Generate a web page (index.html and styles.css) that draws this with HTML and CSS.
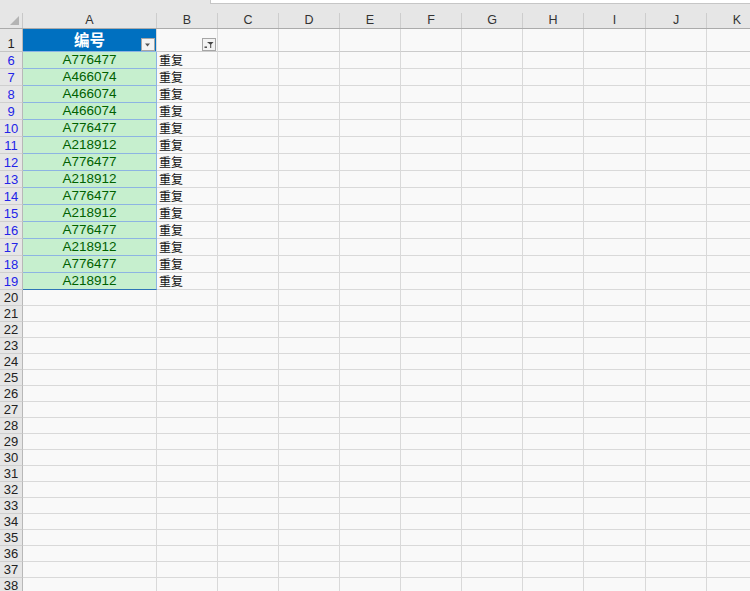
FILE: index.html
```html
<!DOCTYPE html>
<html lang="zh">
<head>
<meta charset="utf-8">
<link rel="stylesheet" href="styles.css">
</head>
<body>
<div class="sheet">
  <div class="topbar"><div class="formula"></div></div>
  <div class="row colhead">
    <div class="corner"><span class="tri"></span></div>
    <div class="ch">A</div><div class="ch">B</div><div class="ch">C</div><div class="ch">D</div><div class="ch">E</div><div class="ch">F</div><div class="ch">G</div><div class="ch">H</div><div class="ch">I</div><div class="ch">J</div><div class="ch">K</div>
  </div>
  <div class="row r1">
    <div class="rh">1</div>
    <div class="c title">编号<span class="fbtn"><svg width="8" height="6" viewBox="0 0 8 6"><path d="M1 1.5h5l-2.5 3z" fill="#555"/></svg></span></div>
    <div class="c"><span class="fbtn"><svg width="10" height="8" viewBox="0 0 10 8"><path d="M3 1h6.5L7.2 3.6V7H6.2V3.6z" fill="#444"/><rect x="0.5" y="5.5" width="2.5" height="1.4" fill="#444"/></svg></span></div>
    <div class="c"></div><div class="c"></div><div class="c"></div><div class="c"></div><div class="c"></div><div class="c"></div><div class="c"></div><div class="c"></div><div class="c"></div>
  </div>
  <div class="row d"><div class="rh f">6</div><div class="c g">A776477</div><div class="c t">重复</div><div class="c"></div><div class="c"></div><div class="c"></div><div class="c"></div><div class="c"></div><div class="c"></div><div class="c"></div><div class="c"></div><div class="c"></div></div>
  <div class="row d"><div class="rh f">7</div><div class="c g">A466074</div><div class="c t">重复</div><div class="c"></div><div class="c"></div><div class="c"></div><div class="c"></div><div class="c"></div><div class="c"></div><div class="c"></div><div class="c"></div><div class="c"></div></div>
  <div class="row d"><div class="rh f">8</div><div class="c g">A466074</div><div class="c t">重复</div><div class="c"></div><div class="c"></div><div class="c"></div><div class="c"></div><div class="c"></div><div class="c"></div><div class="c"></div><div class="c"></div><div class="c"></div></div>
  <div class="row d"><div class="rh f">9</div><div class="c g">A466074</div><div class="c t">重复</div><div class="c"></div><div class="c"></div><div class="c"></div><div class="c"></div><div class="c"></div><div class="c"></div><div class="c"></div><div class="c"></div><div class="c"></div></div>
  <div class="row d"><div class="rh f">10</div><div class="c g">A776477</div><div class="c t">重复</div><div class="c"></div><div class="c"></div><div class="c"></div><div class="c"></div><div class="c"></div><div class="c"></div><div class="c"></div><div class="c"></div><div class="c"></div></div>
  <div class="row d"><div class="rh f">11</div><div class="c g">A218912</div><div class="c t">重复</div><div class="c"></div><div class="c"></div><div class="c"></div><div class="c"></div><div class="c"></div><div class="c"></div><div class="c"></div><div class="c"></div><div class="c"></div></div>
  <div class="row d"><div class="rh f">12</div><div class="c g">A776477</div><div class="c t">重复</div><div class="c"></div><div class="c"></div><div class="c"></div><div class="c"></div><div class="c"></div><div class="c"></div><div class="c"></div><div class="c"></div><div class="c"></div></div>
  <div class="row d"><div class="rh f">13</div><div class="c g">A218912</div><div class="c t">重复</div><div class="c"></div><div class="c"></div><div class="c"></div><div class="c"></div><div class="c"></div><div class="c"></div><div class="c"></div><div class="c"></div><div class="c"></div></div>
  <div class="row d"><div class="rh f">14</div><div class="c g">A776477</div><div class="c t">重复</div><div class="c"></div><div class="c"></div><div class="c"></div><div class="c"></div><div class="c"></div><div class="c"></div><div class="c"></div><div class="c"></div><div class="c"></div></div>
  <div class="row d"><div class="rh f">15</div><div class="c g">A218912</div><div class="c t">重复</div><div class="c"></div><div class="c"></div><div class="c"></div><div class="c"></div><div class="c"></div><div class="c"></div><div class="c"></div><div class="c"></div><div class="c"></div></div>
  <div class="row d"><div class="rh f">16</div><div class="c g">A776477</div><div class="c t">重复</div><div class="c"></div><div class="c"></div><div class="c"></div><div class="c"></div><div class="c"></div><div class="c"></div><div class="c"></div><div class="c"></div><div class="c"></div></div>
  <div class="row d"><div class="rh f">17</div><div class="c g">A218912</div><div class="c t">重复</div><div class="c"></div><div class="c"></div><div class="c"></div><div class="c"></div><div class="c"></div><div class="c"></div><div class="c"></div><div class="c"></div><div class="c"></div></div>
  <div class="row d"><div class="rh f">18</div><div class="c g">A776477</div><div class="c t">重复</div><div class="c"></div><div class="c"></div><div class="c"></div><div class="c"></div><div class="c"></div><div class="c"></div><div class="c"></div><div class="c"></div><div class="c"></div></div>
  <div class="row d"><div class="rh f">19</div><div class="c g last">A218912</div><div class="c t">重复</div><div class="c"></div><div class="c"></div><div class="c"></div><div class="c"></div><div class="c"></div><div class="c"></div><div class="c"></div><div class="c"></div><div class="c"></div></div>
  <div class="row e"><div class="rh">20</div><div class="c"></div><div class="c"></div><div class="c"></div><div class="c"></div><div class="c"></div><div class="c"></div><div class="c"></div><div class="c"></div><div class="c"></div><div class="c"></div><div class="c"></div></div>
  <div class="row e"><div class="rh">21</div><div class="c"></div><div class="c"></div><div class="c"></div><div class="c"></div><div class="c"></div><div class="c"></div><div class="c"></div><div class="c"></div><div class="c"></div><div class="c"></div><div class="c"></div></div>
  <div class="row e"><div class="rh">22</div><div class="c"></div><div class="c"></div><div class="c"></div><div class="c"></div><div class="c"></div><div class="c"></div><div class="c"></div><div class="c"></div><div class="c"></div><div class="c"></div><div class="c"></div></div>
  <div class="row e"><div class="rh">23</div><div class="c"></div><div class="c"></div><div class="c"></div><div class="c"></div><div class="c"></div><div class="c"></div><div class="c"></div><div class="c"></div><div class="c"></div><div class="c"></div><div class="c"></div></div>
  <div class="row e"><div class="rh">24</div><div class="c"></div><div class="c"></div><div class="c"></div><div class="c"></div><div class="c"></div><div class="c"></div><div class="c"></div><div class="c"></div><div class="c"></div><div class="c"></div><div class="c"></div></div>
  <div class="row e"><div class="rh">25</div><div class="c"></div><div class="c"></div><div class="c"></div><div class="c"></div><div class="c"></div><div class="c"></div><div class="c"></div><div class="c"></div><div class="c"></div><div class="c"></div><div class="c"></div></div>
  <div class="row e"><div class="rh">26</div><div class="c"></div><div class="c"></div><div class="c"></div><div class="c"></div><div class="c"></div><div class="c"></div><div class="c"></div><div class="c"></div><div class="c"></div><div class="c"></div><div class="c"></div></div>
  <div class="row e"><div class="rh">27</div><div class="c"></div><div class="c"></div><div class="c"></div><div class="c"></div><div class="c"></div><div class="c"></div><div class="c"></div><div class="c"></div><div class="c"></div><div class="c"></div><div class="c"></div></div>
  <div class="row e"><div class="rh">28</div><div class="c"></div><div class="c"></div><div class="c"></div><div class="c"></div><div class="c"></div><div class="c"></div><div class="c"></div><div class="c"></div><div class="c"></div><div class="c"></div><div class="c"></div></div>
  <div class="row e"><div class="rh">29</div><div class="c"></div><div class="c"></div><div class="c"></div><div class="c"></div><div class="c"></div><div class="c"></div><div class="c"></div><div class="c"></div><div class="c"></div><div class="c"></div><div class="c"></div></div>
  <div class="row e"><div class="rh">30</div><div class="c"></div><div class="c"></div><div class="c"></div><div class="c"></div><div class="c"></div><div class="c"></div><div class="c"></div><div class="c"></div><div class="c"></div><div class="c"></div><div class="c"></div></div>
  <div class="row e"><div class="rh">31</div><div class="c"></div><div class="c"></div><div class="c"></div><div class="c"></div><div class="c"></div><div class="c"></div><div class="c"></div><div class="c"></div><div class="c"></div><div class="c"></div><div class="c"></div></div>
  <div class="row e"><div class="rh">32</div><div class="c"></div><div class="c"></div><div class="c"></div><div class="c"></div><div class="c"></div><div class="c"></div><div class="c"></div><div class="c"></div><div class="c"></div><div class="c"></div><div class="c"></div></div>
  <div class="row e"><div class="rh">33</div><div class="c"></div><div class="c"></div><div class="c"></div><div class="c"></div><div class="c"></div><div class="c"></div><div class="c"></div><div class="c"></div><div class="c"></div><div class="c"></div><div class="c"></div></div>
  <div class="row e"><div class="rh">34</div><div class="c"></div><div class="c"></div><div class="c"></div><div class="c"></div><div class="c"></div><div class="c"></div><div class="c"></div><div class="c"></div><div class="c"></div><div class="c"></div><div class="c"></div></div>
  <div class="row e"><div class="rh">35</div><div class="c"></div><div class="c"></div><div class="c"></div><div class="c"></div><div class="c"></div><div class="c"></div><div class="c"></div><div class="c"></div><div class="c"></div><div class="c"></div><div class="c"></div></div>
  <div class="row e"><div class="rh">36</div><div class="c"></div><div class="c"></div><div class="c"></div><div class="c"></div><div class="c"></div><div class="c"></div><div class="c"></div><div class="c"></div><div class="c"></div><div class="c"></div><div class="c"></div></div>
  <div class="row e"><div class="rh">37</div><div class="c"></div><div class="c"></div><div class="c"></div><div class="c"></div><div class="c"></div><div class="c"></div><div class="c"></div><div class="c"></div><div class="c"></div><div class="c"></div><div class="c"></div></div>
  <div class="row e"><div class="rh">38</div><div class="c"></div><div class="c"></div><div class="c"></div><div class="c"></div><div class="c"></div><div class="c"></div><div class="c"></div><div class="c"></div><div class="c"></div><div class="c"></div><div class="c"></div></div>
</div>
</body>
</html>
```

FILE: styles.css
```css
* { box-sizing: border-box; }
html, body { margin: 0; padding: 0; background: #f9f9f9; overflow: hidden; }
body { width: 750px; height: 591px; font-family: "Liberation Sans", Arial, "Noto Sans CJK SC", sans-serif; }
.sheet { width: 750px; height: 591px; overflow: hidden; }
.topbar { height: 13px; background: #e6e6e6; position: relative; }
.formula { position: absolute; left: 210px; top: 0; right: 0; height: 4px; background: #fff; border-left: 1px solid #c6c6c6; border-bottom: 1px solid #c6c6c6; }
.row { display: grid; grid-template-columns: 23px 134px 61px 61px 61px 61px 61px 61px 61px 62px 61px 61px; grid-template-rows: 100%; width: 768px; }
.colhead { height: 16px; background: #e6e6e6; border-bottom: 1px solid #ababab; }
.corner { position: relative; border-right: 1px solid #c8c8c8; }
.tri { position: absolute; right: 3px; bottom: 3px; width: 0; height: 0; border-left: 9px solid transparent; border-bottom: 9px solid #b4b4b4; }
.ch { border-right: 1px solid #cdcdcd; font-size: 12.5px; color: #333; text-align: center; line-height: 15px; }
.rh { background: #e6e6e6; border-right: 1px solid #b8b8b8; border-bottom: 1px solid #cfcfcf; font-size: 13px; color: #222; text-align: center; overflow: hidden; }
.rh.f { color: #2323e8; }
.c { border-right: 1px solid #d9d9d9; border-bottom: 1px solid #d9d9d9; position: relative; overflow: hidden; }
.r1 { height: 23px; }
.r1 .rh { line-height: 30px; border-bottom: 1px solid #c4c4c4; }
.r1 .c { border-bottom: 1px solid #cbcbcb; }
.title { background: #0070c0; color: #fff; font-family: "Noto Sans CJK SC", sans-serif; font-weight: bold; font-size: 15.5px; line-height: 21px; text-align: center; border-bottom-color: #8db4e2 !important; }
.fbtn { position: absolute; right: 1px; bottom: 0; width: 14px; height: 13px; background: #f3f3f3; border: 1px solid #a6a6a6; display: flex; align-items: center; justify-content: center; }
.d { height: 17px; }
.d .rh { line-height: 17px; }
.g { background: #c6efce; color: #006100; text-align: center; font-size: 13.5px; line-height: 16px; border-bottom: 1px solid #8db4e2; border-right: 1px solid #8db4e2; }
.g.last { border-bottom: 1px solid #2e75b6; }
.t { font-family: "Noto Sans CJK SC", sans-serif; font-size: 12px; line-height: 16px; padding-left: 2px; color: #111; }
.e { height: 16px; }
.e .rh { line-height: 16px; }
```
